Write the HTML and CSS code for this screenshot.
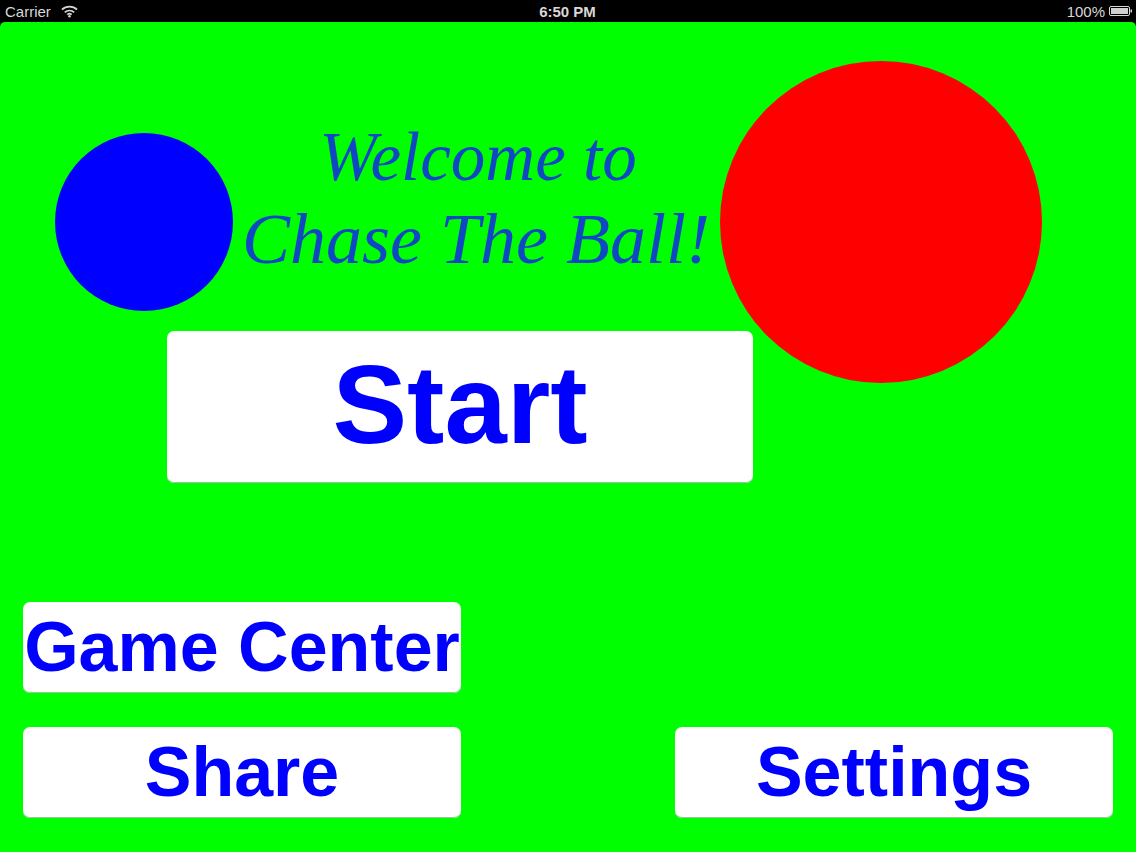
FILE: index.html
```html
<html>
<head>
  <meta name=viewport content='width=1136' />
  <link rel="stylesheet" href="styles.css">
</head>
<body>
<div class="status-bar">
  <div class="status-left">
    <span>Carrier</span>
    <svg class="wifi" width="17" height="13" viewBox="0 0 18 13">
      <path d="M1 4.6 A11.5 11.5 0 0 1 17 4.6" class="wave" />
      <path d="M4 7.4 A7.3 7.3 0 0 1 14 7.4" class="wave" />
      <path d="M6.7 9.9 A3.4 3.4 0 0 1 11.3 9.9" class="wave" />
      <circle cx="9" cy="11.6" r="1.3" fill="#d8d8d8" />
    </svg>
  </div>
  <div class="status-time">6:50 PM</div>
  <div class="status-right">
    <span>100%</span>
    <svg width="24" height="12" viewBox="0 0 24 12">
      <rect x="0.5" y="1.5" width="20" height="9" rx="1.5" fill="none" stroke="#d8d8d8" />
      <rect x="2" y="3" width="17" height="6" fill="#d0d0d0" />
      <rect x="21.5" y="4.5" width="1.5" height="3" fill="#d8d8d8" />
    </svg>
  </div>
</div>
<div class="game">
  <div class="ball ball-blue"></div>
  <div class="ball ball-red"></div>
  <div class="title">
    <div class="title-line1">Welcome to</div>
    <div class="title-line2">Chase The Ball!</div>
  </div>
  <button class="btn btn-start">Start</button>
  <button class="btn btn-small btn-center">Game Center</button>
  <div class="bottom-row">
    <button class="btn btn-small">Share</button>
    <button class="btn btn-small">Settings</button>
  </div>
</div>
</body>
</html>
```

FILE: styles.css
```css
html, body {
  margin: 0;
  padding: 0;
  background: #000;
  overflow: hidden;
}
body {
  width: 1136px;
  height: 852px;
  font-family: "Liberation Sans", Arial, sans-serif;
}
.status-bar {
  height: 22px;
  display: flex;
  align-items: center;
  justify-content: space-between;
  padding: 0 3px 0 5px;
  box-sizing: border-box;
  position: relative;
  color: #d8d8d8;
  font-size: 15px;
}
.status-left, .status-right {
  display: flex;
  align-items: center;
  gap: 10px;
}
.status-right {
  gap: 4px;
}
.status-time {
  position: absolute;
  left: 0;
  right: 0;
  text-align: center;
  font-weight: bold;
  padding-right: 1px;
}
.wave {
  fill: none;
  stroke: #d8d8d8;
  stroke-width: 1.8;
}
.game {
  position: relative;
  height: 830px;
  box-sizing: border-box;
  background: #00ff00;
  border-radius: 5px 5px 0 0;
  padding: 100px 23px 34px;
  display: flex;
  flex-direction: column;
}
.ball {
  position: absolute;
  border-radius: 50%;
}
.ball-blue {
  left: 55px;
  top: 111px;
  width: 178px;
  height: 178px;
  background: #0000ff;
}
.ball-red {
  left: 720px;
  top: 39px;
  width: 322px;
  height: 322px;
  background: #ff0000;
}
.title {
  width: 466px;
  margin-left: 219px;
  height: 209px;
  text-align: center;
  color: #1048c4;
  font-family: "Liberation Serif", "Times New Roman", serif;
  font-style: italic;
}
.title-line1 {
  font-size: 69px;
  line-height: 70px;
  padding-left: 6px;
}
.title-line2 {
  font-size: 72px;
  line-height: 94px;
  white-space: nowrap;
}
.btn {
  display: block;
  background: #fff;
  color: #0000ff;
  border: none;
  border-radius: 7px;
  box-shadow: inset 0 -1px 0 #9cc49c;
  padding: 0 0 2px;
  font-family: "Liberation Sans", Arial, sans-serif;
  font-weight: bold;
  white-space: nowrap;
  box-sizing: border-box;
}
.btn-start {
  width: 586px;
  height: 152px;
  margin-left: 144px;
  padding-bottom: 5px;
  font-size: 112px;
}
.btn-small {
  width: 438px;
  height: 91px;
  font-size: 70px;
}
.btn-center {
  margin-top: 119px;
}
.bottom-row {
  display: flex;
  justify-content: space-between;
  margin-top: 34px;
}
```
